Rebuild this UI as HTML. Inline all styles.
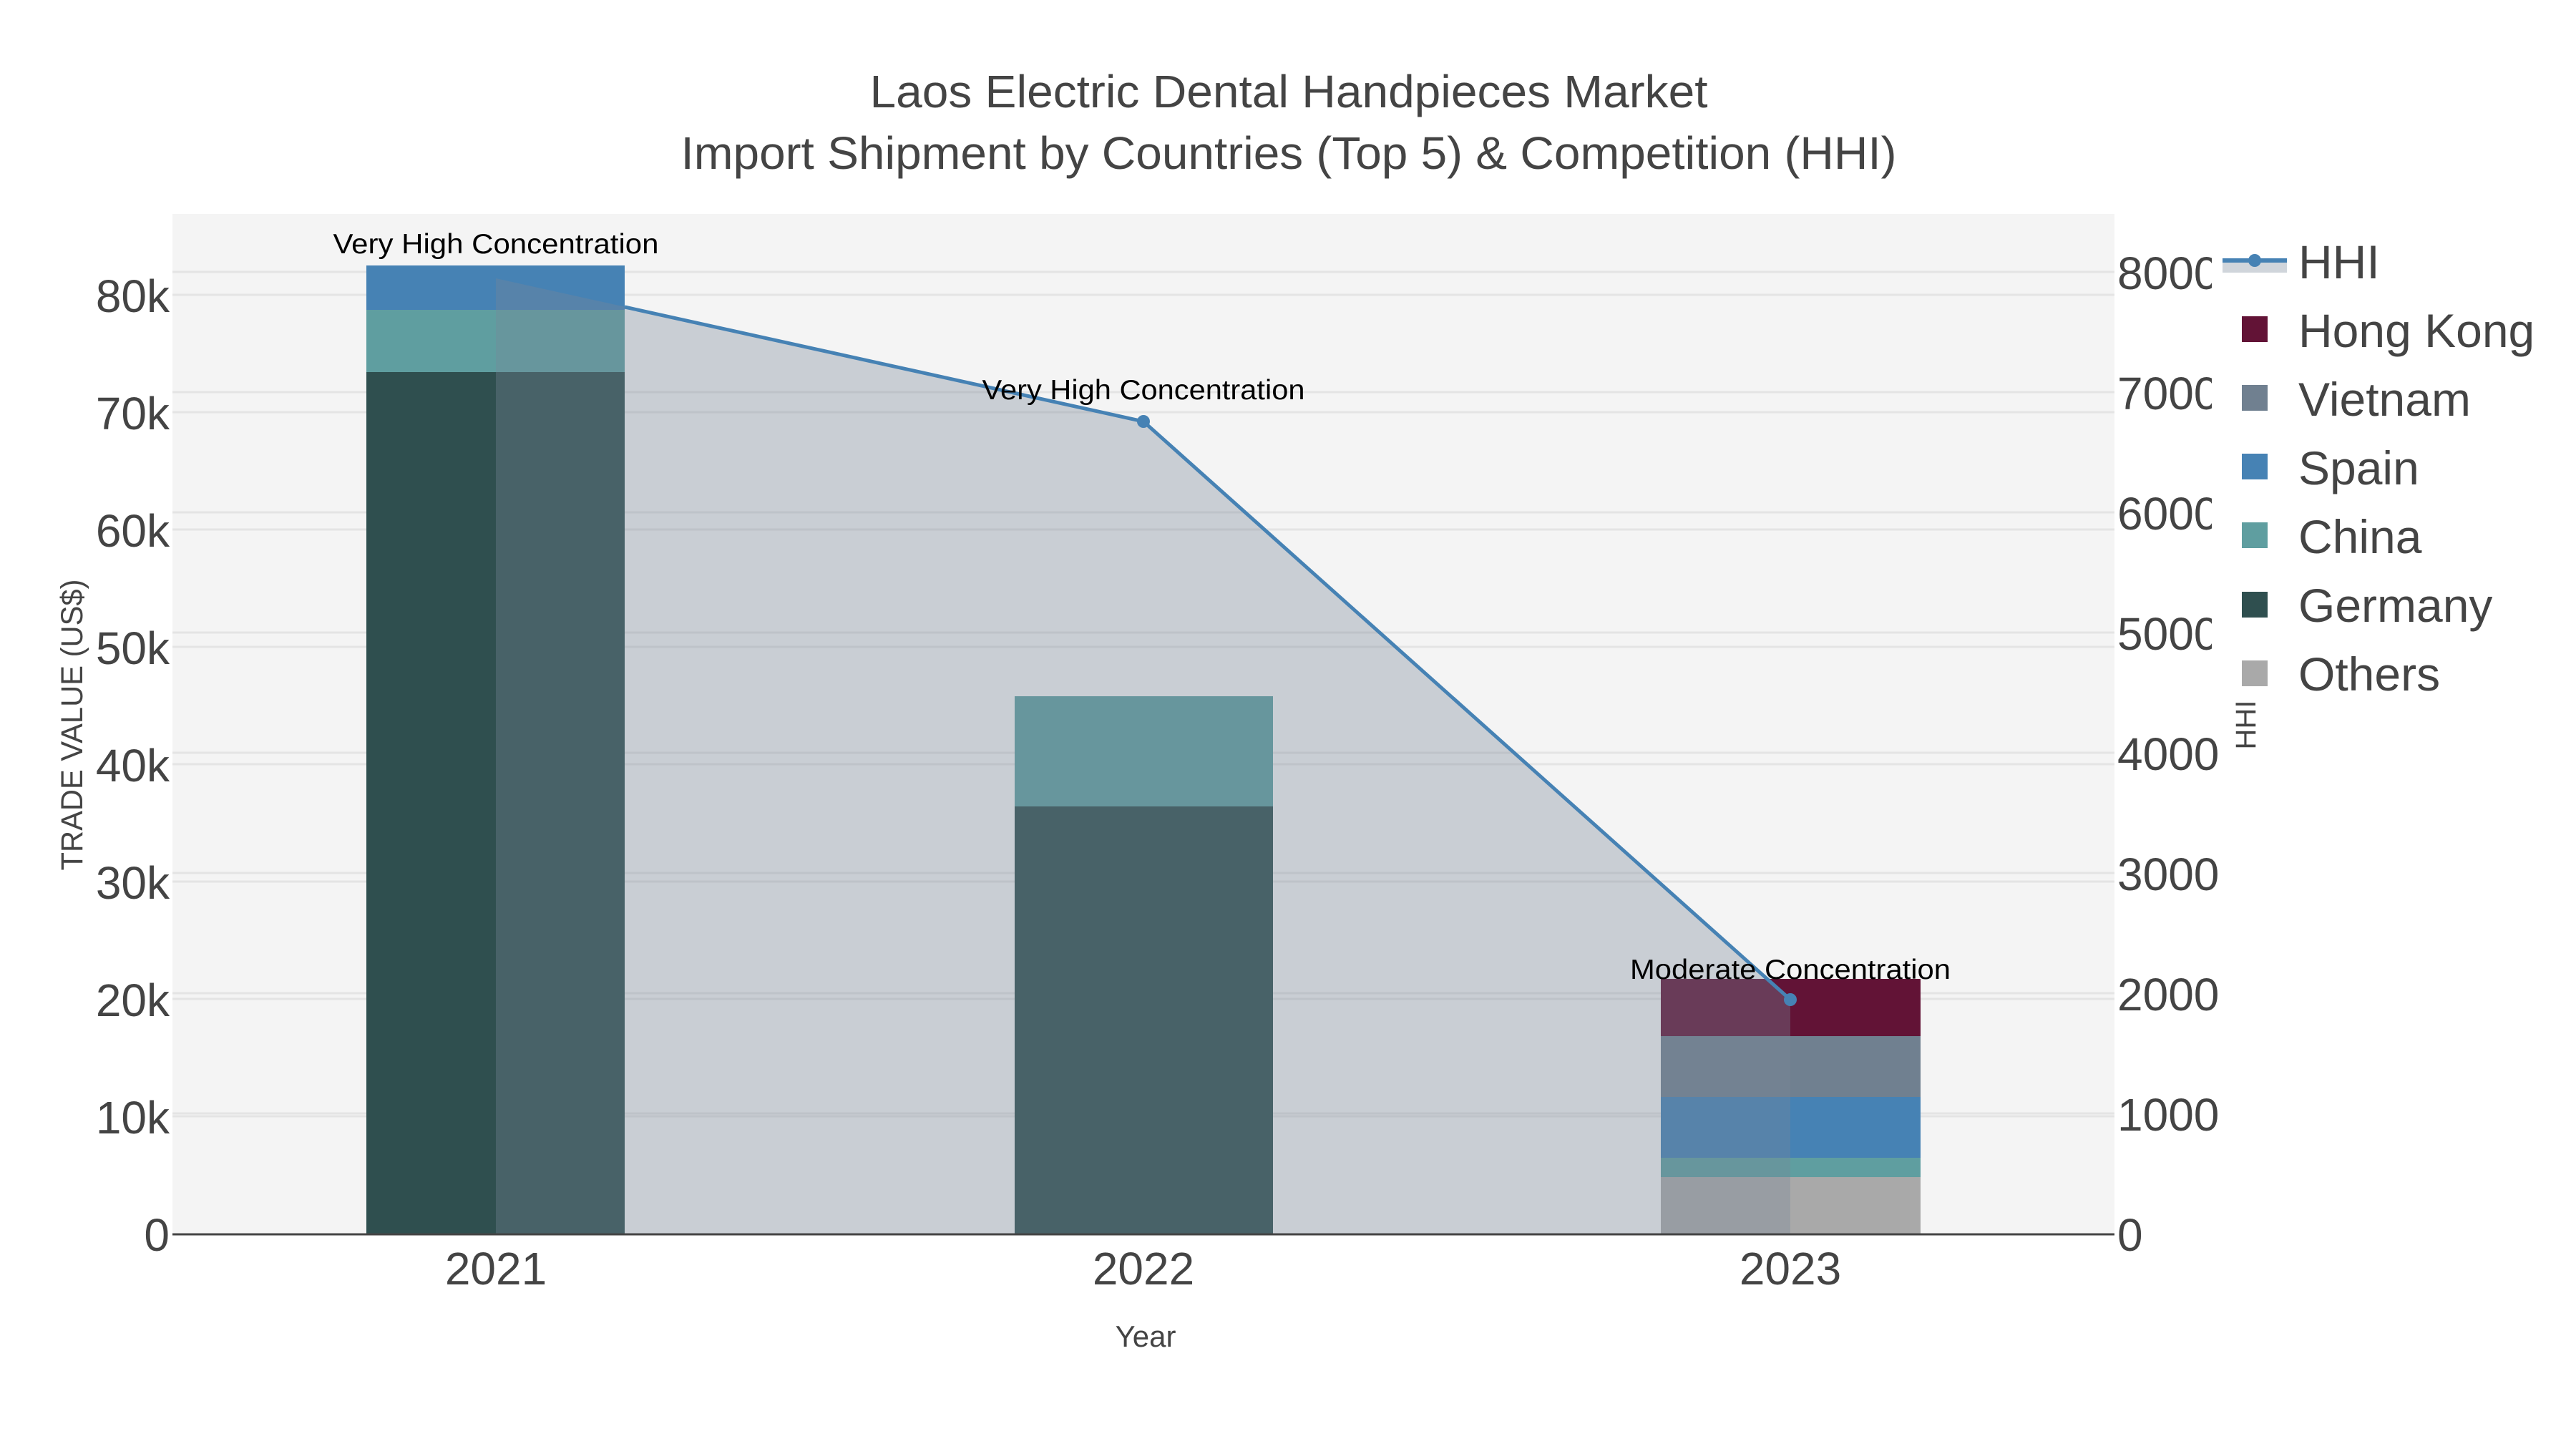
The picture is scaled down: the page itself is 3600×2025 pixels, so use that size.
<!DOCTYPE html>
<html><head><meta charset="utf-8"><style>html,body{margin:0;padding:0;background:#fff}svg{display:block}</style></head>
<body>
<svg width="3600" height="2025" viewBox="0 0 3600 2025" xmlns="http://www.w3.org/2000/svg" font-family="Liberation Sans, Arial, sans-serif">
<rect width="3600" height="2025" fill="#fff"/>
<rect x="241" y="299" width="2714" height="1425" fill="#f4f4f4"/>
<g stroke="#e4e4e4" stroke-width="3">
<line x1="241" x2="2955" y1="1560" y2="1560"/><line x1="241" x2="2955" y1="1396" y2="1396"/>
<line x1="241" x2="2955" y1="1232" y2="1232"/><line x1="241" x2="2955" y1="1068" y2="1068"/>
<line x1="241" x2="2955" y1="904" y2="904"/><line x1="241" x2="2955" y1="740" y2="740"/>
<line x1="241" x2="2955" y1="576" y2="576"/><line x1="241" x2="2955" y1="412" y2="412"/>
<line x1="241" x2="2955" y1="1556" y2="1556"/><line x1="241" x2="2955" y1="1388" y2="1388"/>
<line x1="241" x2="2955" y1="1220" y2="1220"/><line x1="241" x2="2955" y1="1052" y2="1052"/>
<line x1="241" x2="2955" y1="884" y2="884"/><line x1="241" x2="2955" y1="716" y2="716"/>
<line x1="241" x2="2955" y1="548" y2="548"/><line x1="241" x2="2955" y1="380" y2="380"/>
</g>
<!-- bars -->
<rect x="512" y="520" width="361" height="1204" fill="#2f4f4f"/>
<rect x="512" y="433" width="361" height="87" fill="#5f9ea0"/>
<rect x="512" y="371" width="361" height="62" fill="#4682b4"/>
<rect x="1418" y="1127" width="361" height="597" fill="#2f4f4f"/>
<rect x="1418" y="973" width="361" height="154" fill="#5f9ea0"/>
<rect x="2321" y="1645" width="363" height="79" fill="#a9a9a9"/>
<rect x="2321" y="1618" width="363" height="27" fill="#5f9ea0"/>
<rect x="2321" y="1533" width="363" height="85" fill="#4682b4"/>
<rect x="2321" y="1448" width="363" height="85" fill="#708090"/>
<rect x="2321" y="1368" width="363" height="80" fill="#621336"/>
<polygon points="693,389 1598,589 2502,1397 2502,1724 693,1724" fill="rgba(119,136,153,0.35)"/>
<polyline points="873,429 1598,589 2502,1397" fill="none" stroke="#4682b4" stroke-width="5"/>
<circle cx="1598" cy="589" r="9" fill="#4682b4"/>
<circle cx="2502" cy="1397" r="9" fill="#4682b4"/>
<line x1="241" x2="2955" y1="1725" y2="1725" stroke="#444" stroke-width="3"/>
<!-- annotations -->
<g fill="#000" font-size="39" text-anchor="middle">
<text x="693" y="354" textLength="455" lengthAdjust="spacingAndGlyphs">Very High Concentration</text>
<text x="1598" y="558" textLength="451" lengthAdjust="spacingAndGlyphs">Very High Concentration</text>
<text x="2502" y="1368" textLength="448" lengthAdjust="spacingAndGlyphs">Moderate Concentration</text>
</g>
<!-- title -->
<g fill="#444" font-size="64" text-anchor="middle">
<text x="1801" y="150" textLength="1171" lengthAdjust="spacingAndGlyphs">Laos Electric Dental Handpieces Market</text>
<text x="1801" y="236" textLength="1699" lengthAdjust="spacingAndGlyphs">Import Shipment by Countries (Top 5) &amp; Competition (HHI)</text>
</g>
<!-- left ticks -->
<g fill="#444" font-size="64" text-anchor="end">
<text x="237" y="1748">0</text><text x="237" y="1584">10k</text><text x="237" y="1420">20k</text>
<text x="237" y="1256">30k</text><text x="237" y="1092">40k</text><text x="237" y="928">50k</text>
<text x="237" y="764">60k</text><text x="237" y="600">70k</text><text x="237" y="436">80k</text>
</g>
<text transform="translate(115,1013) rotate(-90)" fill="#444" font-size="43" text-anchor="middle" textLength="407" lengthAdjust="spacingAndGlyphs">TRADE VALUE (US$)</text>
<!-- right ticks -->
<g fill="#444" font-size="64">
<text x="2959" y="1748">0</text><text x="2959" y="1580">1000</text><text x="2959" y="1412">2000</text>
<text x="2959" y="1244">3000</text><text x="2959" y="1076">4000</text><text x="2959" y="908">5000</text>
<text x="2959" y="740">6000</text><text x="2959" y="572">7000</text><text x="2959" y="404">8000</text>
</g>
<rect x="3091" y="300" width="509" height="700" fill="#fff"/>
<text transform="translate(3152,1013) rotate(-90)" fill="#444" font-size="40" text-anchor="middle">HHI</text>
<!-- x axis -->
<g fill="#444" font-size="64" text-anchor="middle">
<text x="693" y="1795">2021</text><text x="1598" y="1795">2022</text><text x="2502" y="1795">2023</text>
</g>
<text x="1601" y="1882" fill="#444" font-size="42" text-anchor="middle">Year</text>
<!-- legend -->
<rect x="3106" y="363" width="90" height="18" fill="rgba(119,136,153,0.35)"/>
<line x1="3106" x2="3196" y1="364" y2="364" stroke="#4682b4" stroke-width="6"/>
<circle cx="3151" cy="364" r="9" fill="#4682b4"/>
<rect x="3133" y="442" width="36" height="36" fill="#621336"/>
<rect x="3133" y="538" width="36" height="36" fill="#708090"/>
<rect x="3133" y="634" width="36" height="36" fill="#4682b4"/>
<rect x="3133" y="730" width="36" height="36" fill="#5f9ea0"/>
<rect x="3133" y="827" width="36" height="36" fill="#2f4f4f"/>
<rect x="3133" y="923" width="36" height="36" fill="#a9a9a9"/>
<g fill="#444" font-size="66">
<text x="3212" y="389">HHI</text>
<text x="3212" y="485">Hong Kong</text>
<text x="3212" y="581">Vietnam</text>
<text x="3212" y="677">Spain</text>
<text x="3212" y="773">China</text>
<text x="3212" y="869">Germany</text>
<text x="3212" y="965">Others</text>
</g>
</svg>
</body></html>
